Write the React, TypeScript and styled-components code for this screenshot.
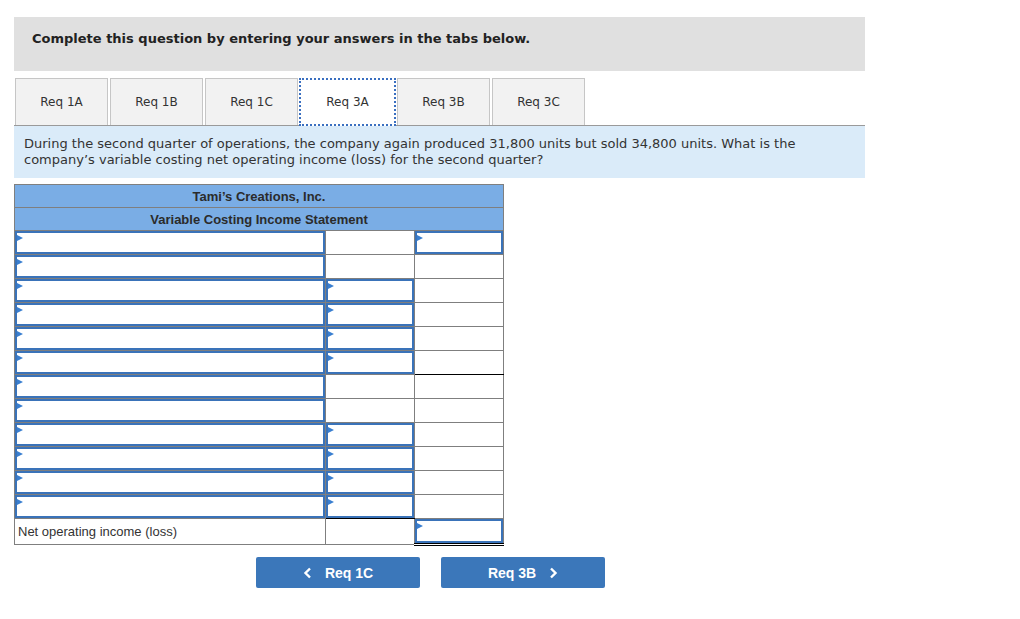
import React from "react";
import styled, { createGlobalStyle } from "styled-components";

const Global = createGlobalStyle`
  html, body { margin: 0; padding: 0; background: #fff; }
  body { font-family: "DejaVu Sans", Verdana, sans-serif; color: #222; }
`;

const Page = styled.div`
  padding: 17px 14px;
  width: 851px;
`;

const Instructions = styled.div`
  background: #e0e0e0;
  height: 54px;
  box-sizing: border-box;
  padding: 14px 0 0 18px;
  line-height: 16px;
  font-weight: bold;
  font-size: 13px;
  color: #222;
`;

const TabRow = styled.div`
  margin-top: 7px;
  display: flex;
  gap: 2px;
  padding-left: 1px;
  border-bottom: 1px solid #9a9a9a;
  height: 47px;
`;

const Tab = styled.div<{ $active?: boolean }>`
  width: ${(p) => (p.$active ? "97px" : "93px")};
  margin: ${(p) => (p.$active ? "0 -1px 0 -1px" : "0")};
  box-sizing: border-box;
  display: flex;
  align-items: center;
  justify-content: center;
  font-size: 12px;
  color: #333;
  background: ${(p) => (p.$active ? "#fff" : "#f2f2f2")};
  border: ${(p) => (p.$active ? "2px dotted #3a6fc0" : "1px solid #c6c6c6")};
  border-bottom: ${(p) => (p.$active ? "2px dotted #3a6fc0" : "none")};
  height: ${(p) => (p.$active ? "48px" : "47px")};
  position: relative;
  z-index: 1;
`;

const Prompt = styled.div`
  background: #daebf9;
  padding: 10px 10px 10px;
  font-size: 13px;
  line-height: 16px;
  color: #333;
`;

const Sheet = styled.table`
  margin-top: 6px;
  border-collapse: collapse;
  width: 489px;
  table-layout: fixed;
  font-family: "Liberation Sans", Arial, sans-serif;
`;

const HeadCell = styled.td`
  background: #7aade5;
  border: 1px solid #7f7f7f;
  height: 22px;
  padding: 0;
  text-align: center;
  font-weight: bold;
  font-size: 13px;
  color: #2b2b2b;
`;

const Cell = styled.td<{ $top?: string; $bottom?: string; $tall?: boolean }>`
  border: 1px solid #7f7f7f;
  ${(p) => (p.$top ? `border-top: ${p.$top};` : "")}
  ${(p) => (p.$bottom ? `border-bottom: ${p.$bottom};` : "")}
  height: ${(p) => (p.$tall ? "26px" : "24px")};
  padding: 0;
  box-sizing: border-box;
  font-size: 13px;
  color: #333;
  position: relative;
`;

const Label = styled.span`
  padding-left: 3px;
`;

const InputBox = styled.div`
  position: absolute;
  inset: 0;
  border: 2px solid #3a73b9;
  background: #fff;
  &::before {
    content: "";
    position: absolute;
    left: 0;
    top: 2px;
    border-left: 6px solid #3a7fd0;
    border-top: 3.5px solid transparent;
    border-bottom: 3.5px solid transparent;
  }
`;

const Nav = styled.div`
  display: flex;
  gap: 21px;
  padding-left: 242px;
  margin-top: 11px;
`;

const NavButton = styled.button`
  width: 164px;
  height: 31px;
  background: #3b77ba;
  border: none;
  border-radius: 2px;
  color: #fff;
  font-family: "Liberation Sans", Arial, sans-serif;
  font-weight: bold;
  font-size: 14px;
  display: flex;
  align-items: center;
  justify-content: center;
  gap: 13px;
  padding: 0;
`;

const Chevron = ({ dir }: { dir: "left" | "right" }) => (
  <svg width="9" height="12" viewBox="0 0 9 12">
    <path
      d={dir === "left" ? "M7 1.5 L2.5 6 L7 10.5" : "M2 1.5 L6.5 6 L2 10.5"}
      fill="none"
      stroke="#fff"
      strokeWidth="2.4"
    />
  </svg>
);

type RowSpec = [boolean, boolean, boolean, string?, string?];
// [col1 input, col2 input, col3 input, col2 bottom, col3 bottom]
const rows: RowSpec[] = [
  [true, false, true],
  [true, false, false],
  [true, true, false],
  [true, true, false],
  [true, true, false],
  [true, true, false, undefined, "1px solid #000"],
  [true, false, false],
  [true, false, false],
  [true, true, false],
  [true, true, false],
  [true, true, false],
  [true, true, false, "1px solid #000"],
];

const tabs = ["Req 1A", "Req 1B", "Req 1C", "Req 3A", "Req 3B", "Req 3C"];

export default function App() {
  return (
    <Page>
      <Global />
      <Instructions>Complete this question by entering your answers in the tabs below.</Instructions>
      <TabRow>
        {tabs.map((t) => (
          <Tab key={t} $active={t === "Req 3A"}>
            {t}
          </Tab>
        ))}
      </TabRow>
      <Prompt>
        During the second quarter of operations, the company again produced 31,800 units but sold 34,800 units. What is the
        <br />
        company’s variable costing net operating income (loss) for the second quarter?
      </Prompt>
      <Sheet>
        <colgroup>
          <col style={{ width: 311 }} />
          <col style={{ width: 89 }} />
          <col style={{ width: 89 }} />
        </colgroup>
        <tbody>
          <tr>
            <HeadCell colSpan={3}>Tami’s Creations, Inc.</HeadCell>
          </tr>
          <tr>
            <HeadCell colSpan={3}>Variable Costing Income Statement</HeadCell>
          </tr>
          {rows.map((r, i) => (
            <tr key={i}>
              <Cell>{r[0] && <InputBox />}</Cell>
              <Cell $bottom={r[3]}>{r[1] && <InputBox />}</Cell>
              <Cell $bottom={r[4]}>{r[2] && <InputBox />}</Cell>
            </tr>
          ))}
          <tr>
            <Cell $tall>
              <Label>Net operating income (loss)</Label>
            </Cell>
            <Cell $tall />
            <Cell $tall $top="1px solid #000" $bottom="3px double #000">
              <InputBox />
            </Cell>
          </tr>
        </tbody>
      </Sheet>
      <Nav>
        <NavButton>
          <Chevron dir="left" />
          Req 1C
        </NavButton>
        <NavButton>
          Req 3B
          <Chevron dir="right" />
        </NavButton>
      </Nav>
    </Page>
  );
}
